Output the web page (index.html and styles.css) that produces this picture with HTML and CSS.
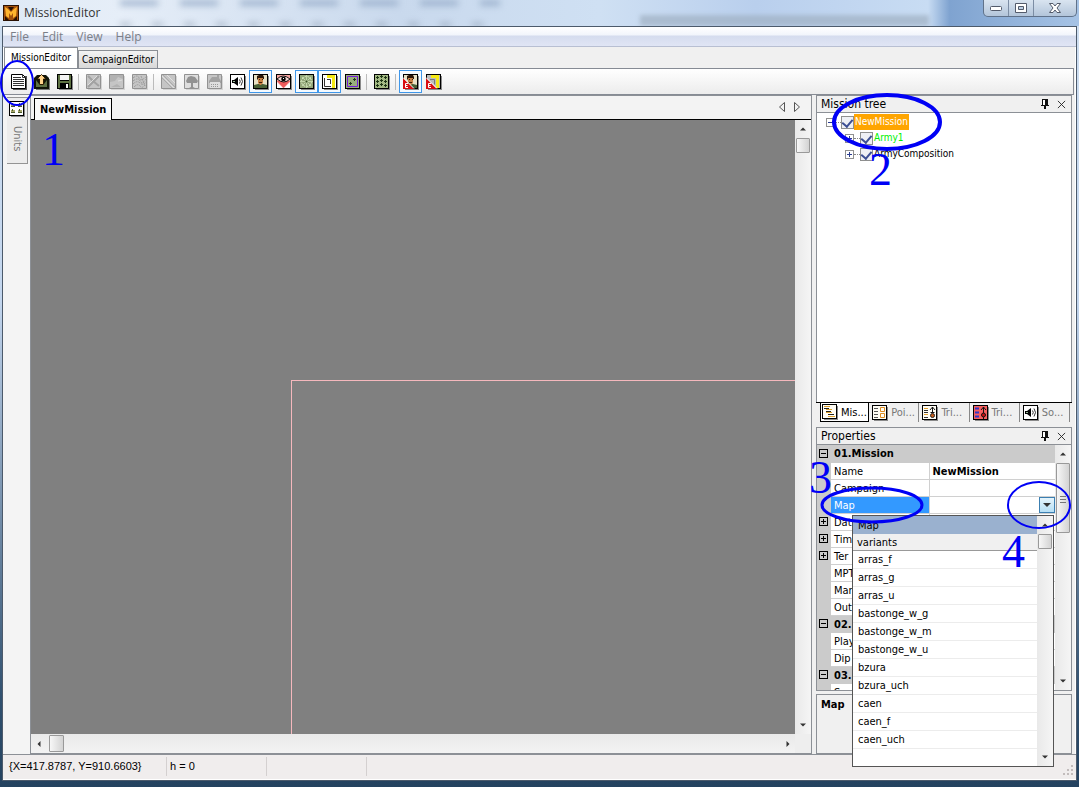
FILE: index.html
```html
<!DOCTYPE html>
<html lang="en">
<head>
<meta charset="utf-8">
<title>MissionEditor</title>
<link rel="stylesheet" href="styles.css">
</head>
<body>
<svg class="defs" aria-hidden="true">
  <defs>
    <symbol id="i-frame" viewBox="0 0 16 16">
      <path d="M2 2H16V16H2z" fill="#8a8a8a"/><path d="M0 0H15V15H0z" fill="#000"/>
    </symbol>
    <symbol id="i-new" viewBox="0 0 16 16">
      <path d="M2 2h14v14H2z" fill="#555"/><path d="M.5 .5H11.5L14.500 3.500V14.500H.5z" fill="#fff" stroke="#000"/>
      <path d="M11.500 .5V3.500H14.500M2 3.500h8M2 5.500h11M2 7.500h11M2 9.500h11M2 11.500h11" fill="none" stroke="#333"/>
    </symbol>
    <symbol id="i-open" viewBox="0 0 16 16">
      <path d="M2 5h14v11H2z" fill="#777"/><path d="M0 4l3-3h9l3 3v11H0z" fill="#101408"/><path d="M2 6l3 4h5l3-4v7H2z" fill="#5d7042"/>
      <path d="M7.500 0.500L12 5H9.500V10.500H5.500V5H3z" fill="#ffd38a" stroke="#2a1a00"/>
    </symbol>
    <symbol id="i-save" viewBox="0 0 16 16">
      <use href="#i-frame"/><path d="M1 1h2v13H1zM12 1h2v13h-2zM3 7h9v2H3z" fill="#5e7243"/><path d="M3 1h9v5H3z" fill="#f4f4f4"/><path d="M9 10h2v4H9z" fill="#fff"/>
    </symbol>
    <symbol id="i-off" viewBox="0 0 16 16"><path d="M2 2H16V16H2z" fill="#d4d4d4"/><path d="M.5 .5h14v14H.5z" fill="#c5c5c5" stroke="#929292"/></symbol>
    <symbol id="i-cross" viewBox="0 0 16 16"><use href="#i-off"/><path d="M2 13L13 2M2 2l5 5 6 5" stroke="#a2a2a2" stroke-width="2" fill="none"/><path d="M2 11L11 2" stroke="#ddd"/></symbol>
    <symbol id="i-cloud" viewBox="0 0 16 16"><use href="#i-off"/><path d="M1 8l5-1 3-4 5 2V1H1zM2 13l6-3 4 3z" fill="#b2b2b2"/><path d="M9 7l4-1" stroke="#ddd"/></symbol>
    <symbol id="i-contour" viewBox="0 0 16 16"><use href="#i-off"/><path d="M1 4q5-4 6 0t7-1M1 7q5-4 7 0t6-2M1 10q4-4 7-1t6-1M2 13q4-4 6-1t5-1M9 2l4 10" stroke="#9c9c9c" fill="none" stroke-dasharray="2 1"/></symbol>
    <symbol id="i-diag" viewBox="0 0 16 16"><use href="#i-off"/><path d="M1 2l12 12M6 1l8 8" stroke="#e0e0e0"/><path d="M2 1l12 12M1 4l10 10" stroke="#aaa"/></symbol>
    <symbol id="i-tree" viewBox="0 0 16 16"><use href="#i-off"/><path d="M1 1h13v13H1z" fill="#dedede"/><path d="M2 7l2-4 3-1 4 1 3 4-1 2H9v4l2 1H5l2-1V9H3z" fill="#929292"/></symbol>
    <symbol id="i-house" viewBox="0 0 16 16"><use href="#i-off"/><path d="M2 7l3-4h5V1h2v3l2 3v2H2z" fill="#a2a2a2"/><path d="M3 8h10v6H3z" fill="#dfdfdf"/><path d="M4 10.500h8M4 12.500h8" stroke="#999" stroke-dasharray="1 1"/></symbol>
    <symbol id="i-sound" viewBox="0 0 16 16"><use href="#i-frame"/><path d="M1 1h13v13H1z" fill="#fff"/><path d="M2 6h2l4-3v9L4 9H2z"/><path d="M3 7h2v1H3z" fill="#9b9"/><path d="M9.500 5.500q1.500 2 0 4M11 3.500q3 4 0 8" fill="none" stroke="#333"/></symbol>
    <symbol id="i-man" viewBox="0 0 16 16"><use href="#i-frame"/><path d="M1 1h13v13H1z" fill="#e8e1c5"/><path d="M1 14v-3l4-1h5l4 1v3z" fill="#476035"/><path d="M5 3h5v6L8 11H7L5 9z" fill="#c78145"/><path d="M4 5V2l2-1h4l1 2v2h-1V4H5v2z" fill="#2c1608"/><path d="M6 5.500h1M9 5.500h1M6 8.500h3" stroke="#40200c"/></symbol>
    <symbol id="i-eye" viewBox="0 0 16 16"><use href="#i-frame"/><path d="M1 1h13v13H1z" fill="#f7a5a1"/><path d="M1 7h13l-6.500 7z" fill="#ee5b5b"/><path d="M1 14V8l6 6zM14 14V8l-6 6z" fill="#fff"/><path d="M1 5q6-6 13 0-6 6-13 0" fill="#f4d5d0" stroke="#111"/><circle cx="7.500" cy="5" r="2.300"/><path d="M7 4h1v1H7z" fill="#fff"/></symbol>
    <symbol id="i-radar" viewBox="0 0 16 16"><use href="#i-frame"/><path d="M1 1h13v13H1z" fill="#94a77a"/><circle cx="7.500" cy="7.500" r="5" fill="none" stroke="#ddecc8" stroke-dasharray="2 1"/><path d="M7.500 1v13M1 7.500h13M3 3l9 9M12 3l-9 9" stroke="#c1d6a8"/><path d="M6.500 6.500h2v2h-2z" fill="#344d22"/></symbol>
    <symbol id="i-zone" viewBox="0 0 16 16"><use href="#i-frame"/><path d="M1 1h13v13H1z" fill="#fff"/><path d="M5 1h8v13h-3V4H5z" fill="#f6ea14"/><path d="M2.500 4v8.500H9M5 5.500H8.500V10" stroke="#333" fill="none"/></symbol>
    <symbol id="i-purple" viewBox="0 0 16 16"><use href="#i-frame"/><path d="M1 1h13v13H1z" fill="#9aaf7d"/><path d="M2.500 2.500h10v10h-10z" fill="none" stroke="#741bdc"/><path d="M8 5.500h3M9.500 4v3M4 9.500h3M5.500 8v3" stroke="#24371a"/></symbol>
    <symbol id="i-plants" viewBox="0 0 16 16"><use href="#i-frame"/><path d="M1 1h13v13H1z" fill="#a4ba84"/><path d="M2 3.500h3M6 2.500h3M10 3.500h3M2 7.500h3M6 6.500h3M10 7.500h3M2 11.500h3M6 10.500h3M10 11.500h3M3.500 2v3M7.500 1v3M11.500 2v3M3.500 6v3M7.500 5v3M11.500 6v3M3.500 10v3M7.500 9v3M11.500 10v3" stroke="#1d3514"/></symbol>
    <symbol id="i-badge" viewBox="0 0 16 16"><path d="M0 4l11 11H0z" fill="#d90c10"/><path d="M0 3.500l11 11" stroke="#fff"/><path d="M5 9.500H2.500v4H5M2.500 11.500h2" stroke="#fff" fill="none"/></symbol>
    <symbol id="i-man-e" viewBox="0 0 16 16"><use href="#i-man"/><use href="#i-badge"/></symbol>
    <symbol id="i-zone-e" viewBox="0 0 16 16"><use href="#i-frame"/><path d="M1 1h13v13H1z" fill="#bbb"/><path d="M5 1h8v13h-3V4H5z" fill="#f6ea14"/><path d="M4 5.500h4.500v5" stroke="#777" fill="none"/><use href="#i-badge"/></symbol>
    <symbol id="i-units" viewBox="0 0 16 16"><use href="#i-frame"/><path d="M1 1h13v13H1z" fill="#fff"/><path d="M2 3h4v3H2zM9 3h4v3H9zM2 9h4v3H2zM9 9h4v3H9z" fill="#a8a86a"/><path d="M2 5.500h4M9 5.500h4M2 11.500h4M9 11.500h4M3.500 2v2M10.500 2v2M3.500 8v2M10.500 8v2" stroke="#4c5a2c"/></symbol>
    <symbol id="i-outline" viewBox="0 0 16 16"><use href="#i-frame"/><path d="M1 1h13v13H1z" fill="#fffdf5"/><path d="M2 2.500h6M4 5.500h6M4 8.500h6M6 12.500h7" stroke="#dda02b"/><path d="M2 4.500h5M4 7.500h5M6 10.500h6" stroke="#222"/></symbol>
    <symbol id="i-points" viewBox="0 0 16 16"><use href="#i-frame"/><path d="M1 1h13v13H1z" fill="#fffdf5"/><path d="M2 3.500h4M2 6.500h4M2 9.500h4M2 12.500h4" stroke="#555"/><path d="M8.500 2.500h4v4h-4zM8.500 8.500h4v4h-4z" fill="none" stroke="#dc8b20"/></symbol>
    <symbol id="i-trig" viewBox="0 0 16 16"><use href="#i-frame"/><path d="M1 1h13v13H1z" fill="#fffdf5"/><path d="M2 3.500h4M2 9.500h4" stroke="#df9e30"/><path d="M2 5.500h4M2 7.500h4M2 12.500h4" stroke="#333"/><path d="M10.500 7V2M8 5l2.500-3L13 5M8.500 7.500h4" fill="none" stroke="#111"/><circle cx="10.500" cy="10.500" r="2" fill="#c85b17" stroke="#222"/></symbol>
    <symbol id="i-trig-r" viewBox="0 0 16 16"><use href="#i-frame"/><path d="M1 1h13v13H1z" fill="#f76060"/><path d="M2 3.500h4M2 7.500h4M2 11.500h4" stroke="#3036c8" stroke-width="2"/><path d="M10.500 14V2M8 5l2.500-3L13 5" fill="none" stroke="#111"/><circle cx="10.500" cy="10" r="2" fill="#c90f0f" stroke="#111"/></symbol>
    <symbol id="i-pin" viewBox="0 0 10 12"><path d="M3 1h4v6H3z" fill="#fff"/><path d="M2 1h6v1H2zM2 1h1v6H2zM5 1h3v6H5zM1 7h8v1H1zM4 8h2v3H4z" fill="#111"/></symbol>
    <symbol id="i-close" viewBox="0 0 10 10"><path d="M1 1l8 8M9 1L1 9" stroke="#222" fill="none"/></symbol>
    <symbol id="a-up" viewBox="0 0 8 4"><path d="M0 4L4 0l4 4z" fill="#333"/></symbol>
    <symbol id="a-down" viewBox="0 0 8 4"><path d="M0 0h8L4 4z" fill="#333"/></symbol>
    <symbol id="a-left" viewBox="0 0 4 8"><path d="M4 0v8L0 4z" fill="#333"/></symbol>
    <symbol id="a-right" viewBox="0 0 4 8"><path d="M0 0v8l4-4z" fill="#333"/></symbol>
  </defs>
</svg>

<header class="titlebar">
  <svg class="app-icon" viewBox="0 0 16 16"><path d="M0 0h16v16H0z" fill="#2b1204"/><path d="M1 1h14v14H1z" fill="#a4520d"/><path d="M2 2l3 2 3 3 3-3 3-2-1 9-3 2V8l-2 3-2-3v5l-3-2z" fill="#ffb52e"/><path d="M5 2h6L8 6zM2 11l4 4H2zM14 11l-4 4h4z" fill="#281002"/></svg>
  <h1 class="title">MissionEditor</h1>
  <div class="smudges"><i></i><i></i></div>
  <div class="backdrop"></div>
  <div class="window-buttons">
    <button aria-label="Minimize"><svg width="13" height="7" viewBox="0 0 13 7"><rect x=".5" y="1.500" width="11" height="4" rx="1" fill="#fff" stroke="#535b6b"/></svg></button>
    <button aria-label="Maximize"><svg width="12" height="10" viewBox="0 0 12 10"><path d="M.5 .5h11v9H.5z" fill="#fff" stroke="#535b6b"/><path d="M3.500 3.500h5v3h-5z" fill="#bdd0e4" stroke="#535b6b"/></svg></button>
    <button aria-label="Close" class="wide"><svg width="12" height="10" viewBox="0 0 12 10"><path d="M.5 .5h3.500L6 3 8 .5h3.500L8 5l3.500 4.500H8L6 7 4 9.500H.5L4 5z" fill="#fff" stroke="#535b6b"/></svg></button>
  </div>
</header>

<main class="client">
  <nav class="menu"><button>File</button><button>Edit</button><button>View</button><button>Help</button></nav>
  <div class="mode-tabs" role="tablist">
    <button class="active" role="tab">MissionEditor</button><button role="tab">CampaignEditor</button>
  </div>
  <div class="toolbar" role="toolbar">
    <button aria-label="New"><svg><use href="#i-new"/></svg></button>
    <button aria-label="Open"><svg><use href="#i-open"/></svg></button>
    <button aria-label="Save"><svg><use href="#i-save"/></svg></button>
    <span class="sep"></span>
    <button aria-label="Cut" disabled><svg><use href="#i-cross"/></svg></button>
    <button aria-label="Tiles" disabled><svg><use href="#i-cloud"/></svg></button>
    <button aria-label="Heights" disabled><svg><use href="#i-contour"/></svg></button>
    <span class="sep"></span>
    <button aria-label="Roads" disabled><svg><use href="#i-diag"/></svg></button>
    <button aria-label="Trees" disabled><svg><use href="#i-tree"/></svg></button>
    <button aria-label="Buildings" disabled><svg><use href="#i-house"/></svg></button>
    <button aria-label="Sounds"><svg><use href="#i-sound"/></svg></button>
    <button aria-label="Units" class="on"><svg><use href="#i-man"/></svg></button>
    <button aria-label="Visibility"><svg><use href="#i-eye"/></svg></button>
    <button aria-label="Points" class="on"><svg><use href="#i-radar"/></svg></button>
    <button aria-label="Zones" class="on"><svg><use href="#i-zone"/></svg></button>
    <button aria-label="Area"><svg><use href="#i-purple"/></svg></button>
    <span class="sep"></span>
    <button aria-label="Plants"><svg><use href="#i-plants"/></svg></button>
    <span class="sep"></span>
    <button aria-label="Edit units" class="on"><svg><use href="#i-man-e"/></svg></button>
    <button aria-label="Edit zones"><svg><use href="#i-zone-e"/></svg></button>
  </div>

  <div class="workspace">
    <aside class="dock"><button><svg><use href="#i-units"/></svg><span>Units</span></button></aside>

    <section class="editor">
      <div class="doc-tabs">
        <button class="doc-tab">NewMission</button>
        <span class="doc-nav"><svg width="6" height="10" viewBox="0 0 6 10"><path d="M5.500 .5v9L.5 5z" fill="none" stroke="#555"/></svg><svg width="6" height="10" viewBox="0 0 6 10"><path d="M.5 .5v9L5.500 5z" fill="none" stroke="#555"/></svg></span>
      </div>
      <div class="map-area">
        <div class="map"><div class="bounds"></div></div>
        <div class="vscroll"><svg width="6" height="4"><use href="#a-up"/></svg><i class="thumb"></i><svg class="end" width="6" height="4"><use href="#a-down"/></svg></div>
        <div class="hscroll"><svg width="4" height="6"><use href="#a-left"/></svg><i class="thumb"></i><svg class="end" width="4" height="6"><use href="#a-right"/></svg></div>
        <div class="corner"></div>
      </div>
    </section>

    <div class="side">
      <section class="tree-panel">
        <header class="panel-head"><h2>Mission tree</h2><svg width="10" height="12"><use href="#i-pin"/></svg><svg width="9" height="9"><use href="#i-close"/></svg></header>
        <ul class="tree">
          <li class="root"><span class="box minus"></span><i class="dots"></i><label><input type="checkbox" checked><span class="hot">NewMission</span></label></li>
          <li><span class="box plus"></span><i class="dots"></i><label><input type="checkbox" checked><span class="army">Army1</span></label></li>
          <li><span class="box plus"></span><i class="dots"></i><label><input type="checkbox" checked><span>ArmyComposition</span></label></li>
        </ul>
      </section>
      <div class="side-tabs" role="tablist">
        <button class="active" role="tab"><svg><use href="#i-outline"/></svg>Mis...</button>
        <button role="tab"><svg><use href="#i-points"/></svg>Poi...</button>
        <button role="tab"><svg><use href="#i-trig"/></svg>Tri...</button>
        <button role="tab"><svg><use href="#i-trig-r"/></svg>Tri...</button>
        <button role="tab"><svg><use href="#i-sound"/></svg>So...</button>
      </div>
      <section class="props">
        <header class="panel-head"><h2>Properties</h2><svg width="10" height="12"><use href="#i-pin"/></svg><svg width="9" height="9"><use href="#i-close"/></svg></header>
        <div class="grid-wrap">
          <div class="grid-clip">
            <table class="grid">
              <colgroup><col class="c-gutter"><col class="c-name"><col></colgroup>
              <tbody>
                <tr class="cat"><td><i class="box dark minus"></i></td><th colspan="2">01.Mission</th></tr>
                <tr><td></td><th>Name</th><td class="val">NewMission</td></tr>
                <tr><td></td><th>Campaign</th><td class="val"></td></tr>
                <tr class="sel"><td></td><th>Map</th><td class="val"><button class="combo" aria-label="Open list"><svg width="8" height="4"><use href="#a-down"/></svg></button></td></tr>
                <tr><td><i class="box dark plus"></i></td><th>Dat</th><td class="val"></td></tr>
                <tr><td><i class="box dark plus"></i></td><th>Tim</th><td class="val"></td></tr>
                <tr><td><i class="box dark plus"></i></td><th>Ter</th><td class="val"></td></tr>
                <tr><td></td><th>MPT</th><td class="val"></td></tr>
                <tr><td></td><th>Mar</th><td class="val"></td></tr>
                <tr><td></td><th>Out</th><td class="val"></td></tr>
                <tr class="cat"><td><i class="box dark minus"></i></td><th colspan="2">02.</th></tr>
                <tr><td></td><th>Play</th><td class="val"></td></tr>
                <tr><td></td><th>Dip</th><td class="val"></td></tr>
                <tr class="cat"><td><i class="box dark minus"></i></td><th colspan="2">03.</th></tr>
                <tr><td></td><th>Sup</th><td class="val"></td></tr>
              </tbody>
            </table>
          </div>
          <div class="vscroll narrow"><svg width="6" height="4"><use href="#a-up"/></svg><i class="thumb tall"></i><svg class="end" width="6" height="4"><use href="#a-down"/></svg></div>
          <div class="popup">
            <div class="popup-list">
              <div class="popup-title">Map</div>
              <div class="popup-col">variants</div>
              <ul role="listbox" aria-label="Map variants">
                <li role="option">arras_f</li><li role="option">arras_g</li><li role="option">arras_u</li><li role="option">bastonge_w_g</li><li role="option">bastonge_w_m</li><li role="option">bastonge_w_u</li><li role="option">bzura</li><li role="option">bzura_uch</li><li role="option">caen</li><li role="option">caen_f</li><li role="option">caen_uch</li>
              </ul>
            </div>
            <div class="vscroll"><svg width="6" height="4"><use href="#a-up"/></svg><i class="thumb"></i><svg class="end" width="6" height="4"><use href="#a-down"/></svg></div>
          </div>
        </div>
        <div class="describe">Map</div>
      </section>
    </div>
  </div>

  <footer class="status"><span class="coords">{X=417.8787, Y=910.6603}</span><span>h = 0</span><span></span><svg class="grip" width="12" height="12" viewBox="0 0 12 12"><path d="M9 1h2v2H9zM9 5h2v2H9zM5 5h2v2H5zM9 9h2v2H9zM5 9h2v2H5zM1 9h2v2H1z" fill="#c2bcbc"/></svg></footer>
</main>

<svg class="marks marks-left" width="80" height="200" viewBox="0 0 80 200">
  <ellipse cx="17" cy="83" rx="16" ry="22" stroke-width="2"/>
  <text x="42" y="165">1</text>
</svg>
<svg class="marks marks-right" width="279" height="600" viewBox="800 0 279 600">
  <ellipse cx="887" cy="122" rx="53" ry="27" stroke-width="4"/>
  <ellipse cx="872" cy="505" rx="50" ry="17" stroke-width="3"/>
  <ellipse cx="1039" cy="505" rx="31" ry="23" stroke-width="2"/>
  <text x="869" y="185">2</text>
  <text x="809" y="493">3</text>
  <text x="1002" y="567">4</text>
</svg>
</body>
</html>
```

FILE: styles.css
```css
* { box-sizing: border-box; }
html, body { height: 100%; }
body {
  margin: 0;
  position: relative;
  display: flex;
  flex-direction: column;
  overflow: hidden;
  padding: 0 2px 6px 2px;
  background: linear-gradient(180deg, #cfdff1 0, #c3d6ee 300px, #30506f 700px, #24425f 100%);
  font: 11px/17px "DejaVu Sans Condensed", "DejaVu Sans", sans-serif;
  color: #000;
}
button { font: inherit; color: inherit; padding: 0; border: 0; background: none; }
h1, h2, ul { margin: 0; padding: 0; font: inherit; list-style: none; }
svg { display: block; flex: none; }
.defs { position: absolute; width: 0; height: 0; }

.titlebar {
  flex: 0 0 26px;
  margin: 0 -2px;
  display: flex;
  align-items: flex-start;
  overflow: hidden;
  background: linear-gradient(90deg, #dfeaf6 0, #e6eef8 120px, #c9d9ed 400px, #cfe0f3 600px, #b9cfed 70%, #c8dcf3 86%, #7fa3d0 88%, #a6c3e5 100%);
}
.app-icon { width: 16px; height: 16px; margin: 5px 0 0 3px; }
.title { margin: 4px 0 0 5px; font: 12px/18px "Open Sans", sans-serif; color: #333; }
.smudges { flex: 0 0 380px; align-self: stretch; display: flex; flex-direction: column; justify-content: space-between; margin-left: 20px; filter: blur(3px); }
.smudges i { height: 6px; background: repeating-linear-gradient(90deg, #8ea5c2 0, #8ea5c2 36px, transparent 40px, transparent 60px); opacity: .7; }
.smudges i + i { height: 3px; background: repeating-linear-gradient(90deg, #7f8fa3 0, #7f8fa3 9px, transparent 13px, transparent 32px); }
.backdrop { flex: 1; align-self: flex-end; height: 11px; margin: 0 54px 0 140px; background: #9fb0c2; filter: blur(2px); opacity: .7; }
.window-buttons { display: flex; height: 17px; margin-right: 2px; border: 1px solid #60728a; border-top: 0; border-radius: 0 0 5px 5px; background: linear-gradient(#d9e4f0, #b3c5da); }
.window-buttons button { width: 25px; display: grid; place-items: center; border-right: 1px solid #7c8da4; }
.window-buttons .wide { width: 42px; border: 0; }

.client { flex: 1; min-height: 0; display: flex; flex-direction: column; background: #f0f0f0; border: 1px solid #4c5a6b; box-shadow: inset 0 0 0 1px #fff; }
.menu { flex: 0 0 19px; display: flex; gap: 13px; padding: 0 7px; border-bottom: 1px solid #b8bfd2; background: linear-gradient(#fff 0, #f2f5fb 8px, #d5dcee 9px, #e0e5f5 100%); font: 12px/19px "Open Sans", sans-serif; color: #7b7f88; }
.mode-tabs { flex: 0 0 21px; display: flex; align-items: flex-end; margin-left: 1px; font: 10px/16px "DejaVu Sans Condensed", "DejaVu Sans", sans-serif; }
.mode-tabs button { height: 18px; padding: 0 3px; border: 1px solid #8a8e94; border-bottom: 0; background: linear-gradient(#f3f3f3, #d8d8d8); }
.mode-tabs .active { height: 21px; padding: 0 6px; background: #fff; }
.toolbar { flex: 0 0 27px; display: flex; align-items: center; padding: 0 4px; border: 1px solid #868b94; border-left: 0; margin: 0 2px 0 0; background: linear-gradient(#fff, #ececec); }
.toolbar button { width: 23px; height: 23px; display: grid; place-items: center; border: 1px solid transparent; }
.toolbar .on { border-color: #3f97ea; background: #f5faff; }
.toolbar svg, .dock svg, .side-tabs svg { width: 16px; height: 16px; }
.sep { width: 6px; height: 16px; background: linear-gradient(90deg, transparent 2px, #bbb 2px, #bbb 3px, transparent 3px); }

.workspace { flex: 1; min-height: 0; display: flex; padding-right: 4px; }
.dock { flex: 0 0 27px; padding: 2px 2px 0 4px; background: #f4f4f4; }
.dock button { width: 21px; height: 67px; display: flex; flex-direction: column; align-items: center; gap: 9px; padding-top: 3px; border: 1px solid #949494; border-width: 1px 1px 1px 0; background: #ececec; color: #777; }
.dock span { writing-mode: vertical-rl; line-height: 16px; }

.editor { flex: 1; min-width: 0; display: flex; flex-direction: column; border: 1px solid #8c9096; background: #f3f3f3; }
.doc-tabs { flex: 0 0 24px; display: flex; align-items: flex-end; justify-content: space-between; padding: 0 11px 0 3px; border-bottom: 1px solid #000; }
.doc-tab { height: 22px; margin-bottom: -1px; padding: 0 5px; border: 1px solid #000; border-bottom: 0; background: #fafafa; font-weight: bold; }
.doc-nav { display: flex; gap: 9px; padding-bottom: 7px; }
.map-area { flex: 1; min-height: 0; display: grid; grid-template: minmax(0, 1fr) 19px / minmax(0, 1fr) 16px; }
.map { background: #808080; display: grid; padding: 260px 0 0 260px; }
.bounds { border: 1px solid #f5b8bd; border-width: 1px 0 0 1px; }
.vscroll { display: flex; flex-direction: column; align-items: center; padding: 7px 0; background: linear-gradient(90deg, #e9e9e9, #f5f5f5); }
.hscroll { display: flex; align-items: center; padding: 0 5px 0 6px; background: linear-gradient(#e9e9e9, #f3f3f3); }
.end { margin-top: auto; }
.hscroll .end { margin: 0 0 0 auto; }
.thumb { flex: none; border: 1px solid #999; border-radius: 1px; background: linear-gradient(90deg, #f7f7f7, #d3d3d3); }
.vscroll .thumb { width: 14px; height: 15px; margin-top: 7px; }
.vscroll .tall { height: 70px; background: linear-gradient(#777, #777) center 32px / 6px 1px no-repeat, linear-gradient(#777, #777) center 35px / 6px 1px no-repeat, linear-gradient(#777, #777) center 38px / 6px 1px no-repeat, linear-gradient(90deg, #f7f7f7, #d3d3d3); }
.hscroll .thumb { width: 15px; height: 17px; margin-left: 8px; }
.corner { background: #eee; }

.side { flex: 0 0 260px; min-width: 0; display: flex; flex-direction: column; padding-left: 4px; background: #f0f0f0; }
.panel-head { flex: none; height: 18px; display: flex; align-items: center; gap: 7px; padding: 0 5px 0 4px; border: 1px solid #8c9096; background: #f0f0f0; font-size: 12px; }
.panel-head h2 { flex: 1; }
.tree-panel { flex: 0 0 308px; display: flex; flex-direction: column; border-bottom: 1px solid #000; }
.tree { flex: 1; padding: 1px 8px; background: #fff; border: 1px solid #8c9096; border-width: 0 1px; font-size: 10px; line-height: 16px; }
.tree li { display: flex; align-items: center; height: 16px; padding-left: 20px; }
.tree .root { padding-left: 1px; }
.box { display: block; flex: none; width: 9px; height: 9px; border: 1px solid #919191; color: #2a3c90; background: linear-gradient(currentColor, currentColor) center / 5px 1px no-repeat; }
.box.plus { background: linear-gradient(currentColor, currentColor) center / 5px 1px no-repeat, linear-gradient(currentColor, currentColor) center / 1px 5px no-repeat; }
.box.dark { margin-left: 2px; border-color: #000; color: #000; }
.dots { width: 6px; border-top: 1px dotted #888; }
.tree label { display: flex; align-items: center; }
input[type=checkbox] { appearance: none; width: 13px; height: 13px; margin: 0; border: 1px solid #8e8f8f; background: #eef0f5; display: grid; place-items: center; }
input[type=checkbox]::after { content: ""; width: 5px; height: 8px; margin-bottom: 2px; border: solid #3c4f94; border-width: 0 2px 2px 0; transform: rotate(40deg); }
.tree label span { padding: 0 1px; }
.tree .hot { background: #ffa500; color: #fff; }
.tree .army { color: #00f000; }

.side-tabs { flex: 0 0 24px; display: flex; padding: 0 1px 0 4px; color: #777; }
.side-tabs button { flex: 1; height: 19px; display: flex; align-items: center; gap: 3px; padding-left: 2px; margin-right: 1px; border-right: 1px solid #888; overflow: hidden; white-space: nowrap; }
.side-tabs .active { border: 1px solid #000; border-top: 0; padding-left: 1px; background: #fff; color: #000; }

.props { flex: 1; min-height: 0; display: flex; flex-direction: column; }
.grid-wrap { flex: 1; min-height: 0; position: relative; display: flex; border: 1px solid #8c9096; border-top: 0; }
.grid-clip { flex: 1; overflow: hidden; }
.grid { width: 100%; border-collapse: collapse; table-layout: fixed; background: #fff; }
.c-gutter { width: 14px; }
.c-name { width: 98px; }
.grid td, .grid th { height: 17px; padding: 0; line-height: 16px; text-align: left; font-weight: normal; border-bottom: 1px solid #d0d0d0; }
.grid th { padding-left: 3px; border-right: 1px solid #d0d0d0; }
.grid th, .grid .val:not(:has(button)) { padding-top: 2px; line-height: 14px; }
.grid td:first-child { background: #cbcbcb; border-color: #cbcbcb; }
.grid .cat th { background: #cbcbcb; font-weight: bold; border-color: #cbcbcb; }
.grid .val { padding-left: 3px; font-weight: bold; }
.grid .sel th { background: #3399ff; color: #fff; }
.combo { display: grid; place-items: center; width: 16px; height: 16px; margin-left: auto; border: 1px solid #3c7fb1; background: linear-gradient(#e5f4fc, #b6dff5); }
.vscroll.narrow { flex: 0 0 16px; }
.popup { position: absolute; left: 35px; right: 17px; top: 70px; height: 252px; z-index: 2; display: flex; border: 1px solid #555; background: #fff; }
.popup-list { flex: 1; }
.popup-title { height: 18px; padding-left: 5px; line-height: 20px; background: #9ab1cf; }
.popup-col { height: 17px; padding-left: 4px; border-bottom: 1px solid #999; background: #f0f0f0; }
.popup li { height: 18px; padding-left: 5px; line-height: 18px; border-bottom: 1px solid #ececec; }
.popup .vscroll { flex: 0 0 16px; }
.describe { flex: 0 0 60px; margin-top: 3px; padding: 1px 4px; border: 1px solid #8c9096; font-weight: bold; }

.status { flex: 0 0 25px; display: flex; padding: 2px 2px 3px 5px; border-top: 1px solid #8c9096; border-bottom: 1px solid #fff; background: #f0eded; font: 11px/19px "Liberation Sans", Arial, sans-serif; }
.status span { width: 100px; padding-left: 3px; border-right: 1px solid #d4d0d0; }
.status .coords { width: 159px; padding-left: 1px; }
.grip { margin: auto 0 0 auto; }

.marks { position: absolute; top: 0; z-index: 5; pointer-events: none; fill: none; stroke: #0000f5; }
.marks-left { left: 0; }
.marks-right { right: 0; }
.marks text { fill: #0000f5; stroke: none; font: 46px "Liberation Serif", "Times New Roman", serif; }
```
